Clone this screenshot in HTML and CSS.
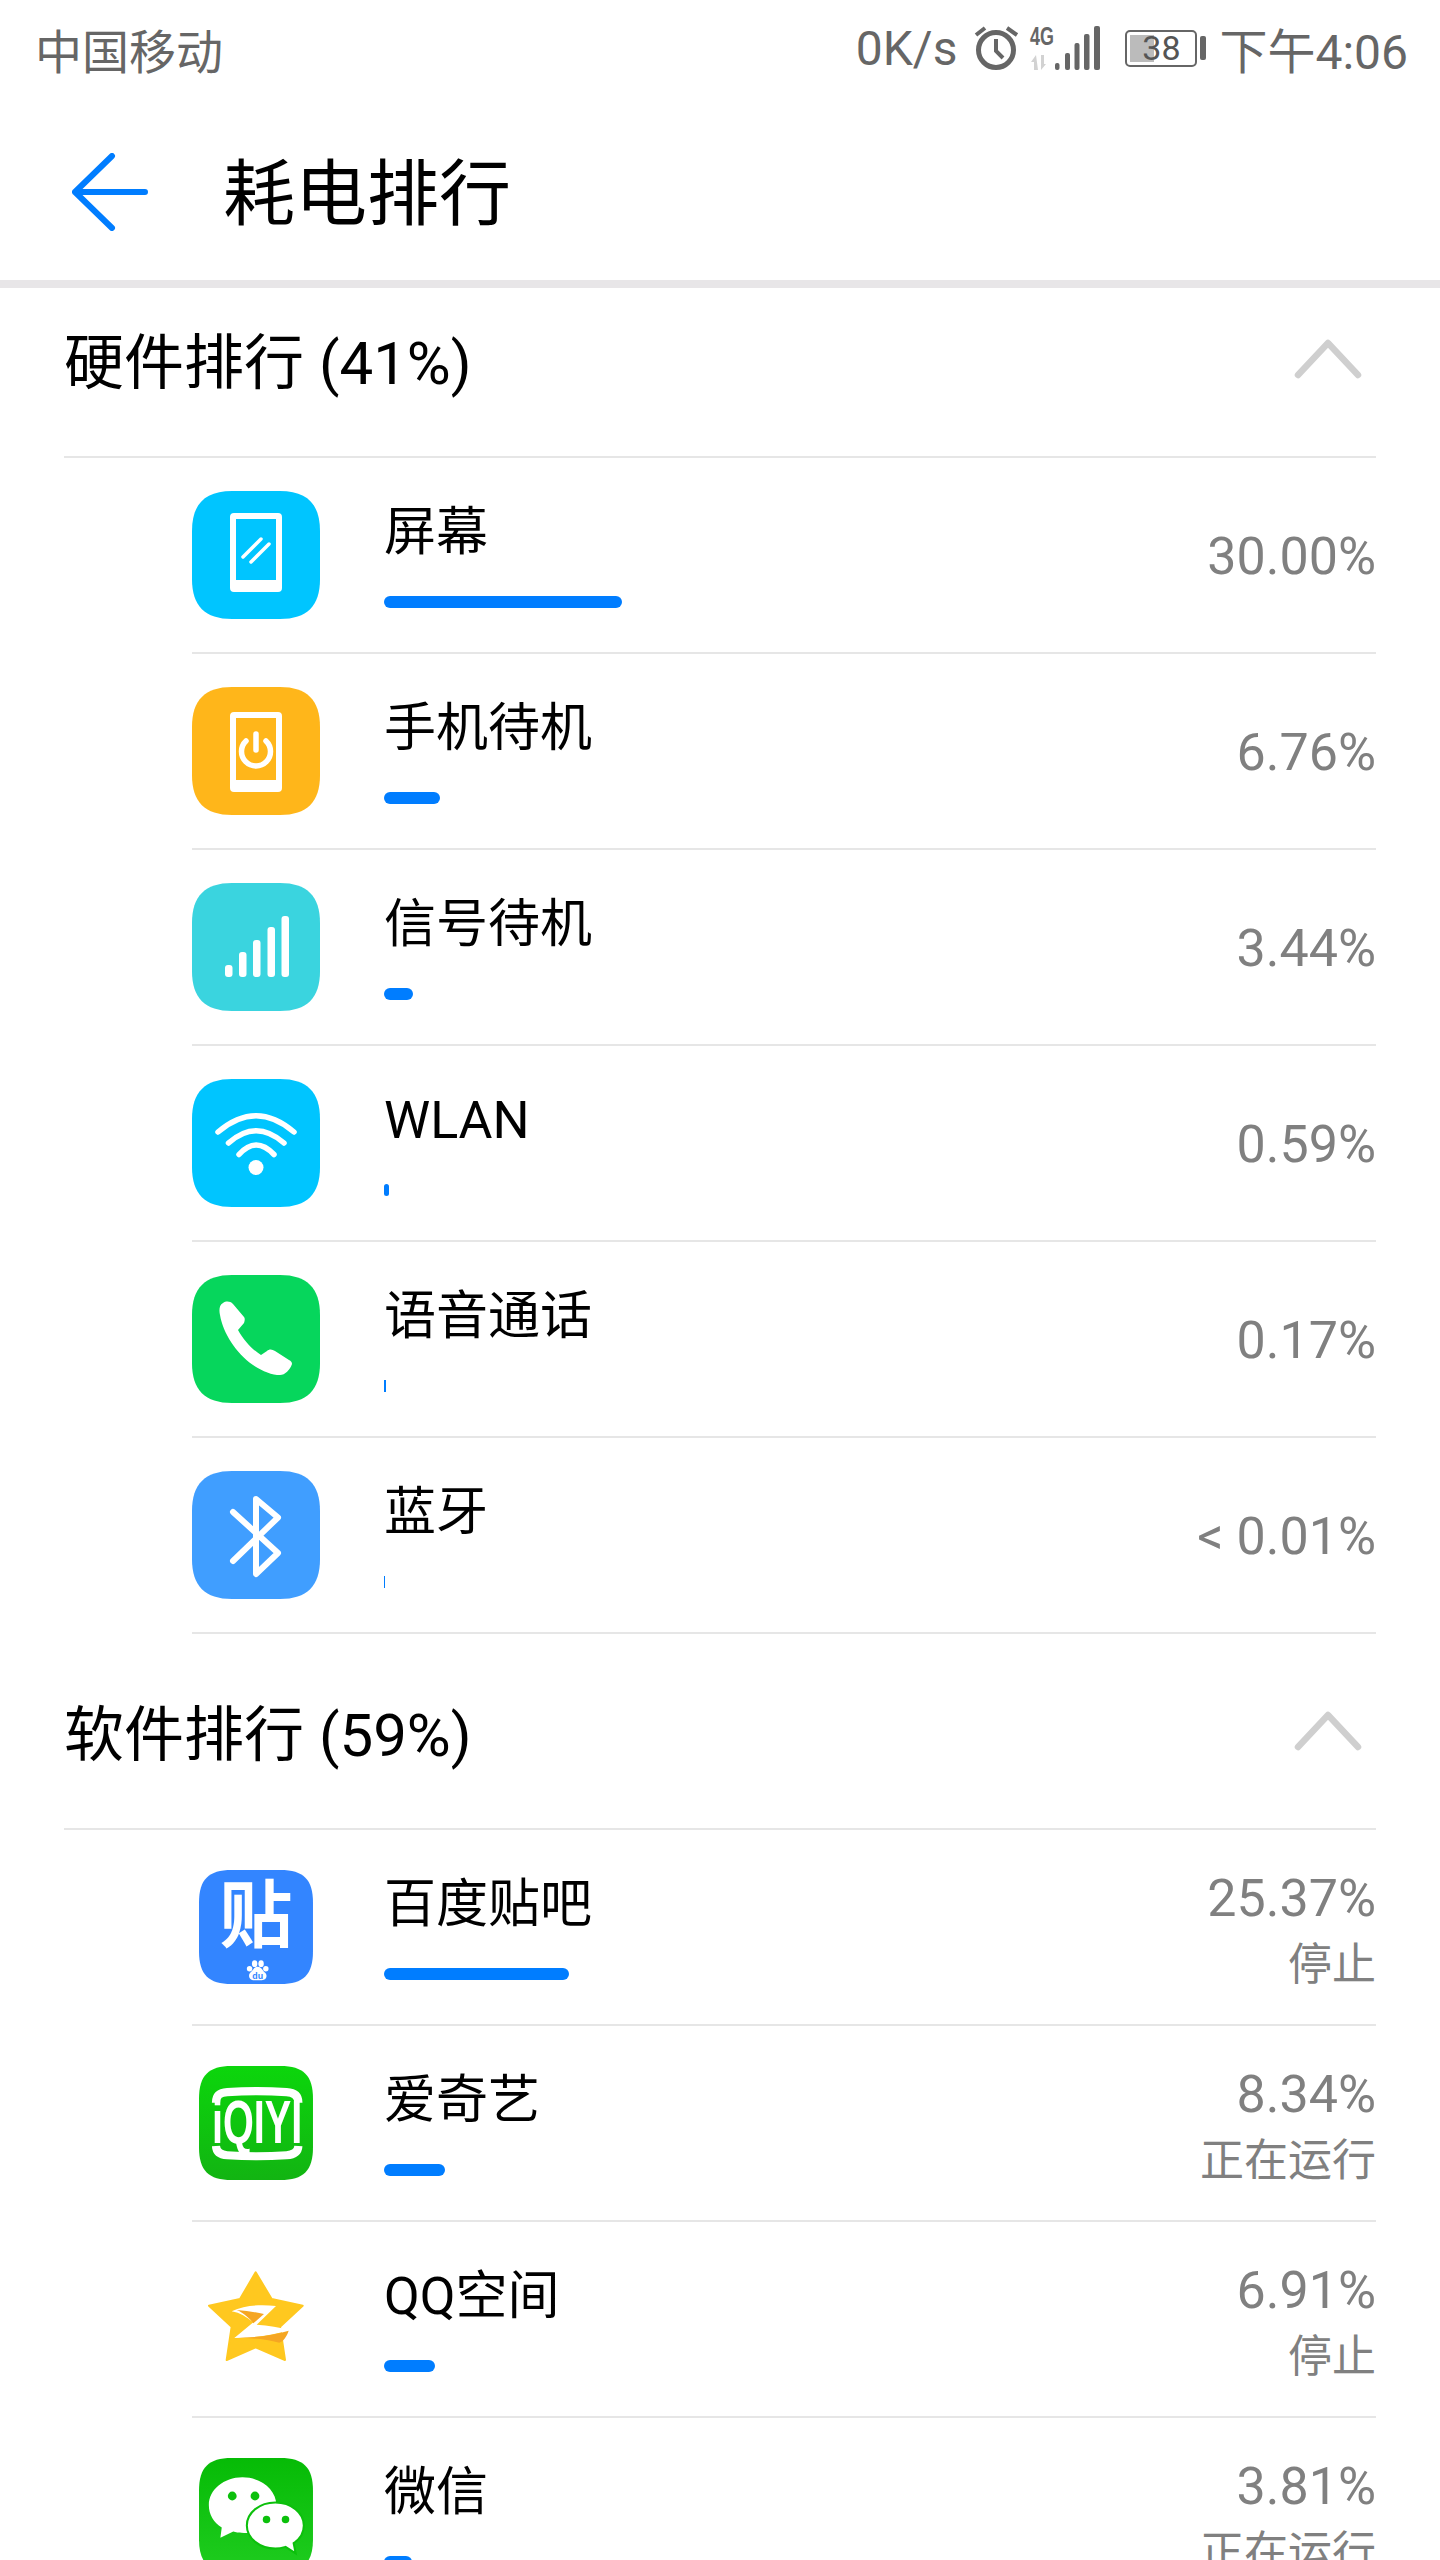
FILE: index.html
```html
<!DOCTYPE html>
<html lang="zh-CN">
<head>
    <meta charset="UTF-8">
    <meta name="viewport" content="width=device-width, initial-scale=1.0">
    <title>耗电排行</title>
    <link rel="stylesheet" href="styles.css">
</head>
<body>
    <svg class="defs" width="0" height="0">
        <defs>
            <path id="squircle" d="M40 0H88C115 0 128 13 128 40V88C128 115 115 128 88 128H40C13 128 0 115 0 88V40C0 13 13 0 40 0Z"/>
            <path id="squircle-app" d="M123 42H267C335 42 363 70 363 138V282C363 350 335 378 267 378H123C55 378 27 350 27 282V138C27 70 55 42 123 42Z"/>
            <linearGradient id="green-iqiyi" x1="0" y1="0" x2="0" y2="1">
                <stop offset="0" stop-color="#0cd60c"/>
                <stop offset="1" stop-color="#12b412"/>
            </linearGradient>
            <linearGradient id="green-wechat" x1="0" y1="0" x2="0" y2="1">
                <stop offset="0" stop-color="#06bb06"/>
                <stop offset="1" stop-color="#1fcc1f"/>
            </linearGradient>
        </defs>
    </svg>

    <div class="page">
        <div class="status-bar">
            <span class="carrier">中国移动</span>
            <div class="status-right">
                <span>0K/s</span>
                <svg class="ic-alarm" width="46" height="46" viewBox="0 0 46 46">
                    <circle cx="23" cy="25" r="17.5" fill="none" stroke="#666" stroke-width="5"/>
                    <path d="M23 14V26L30 33" fill="none" stroke="#666" stroke-width="4"/>
                    <path d="M3 10L12 3M34 3L44 10" fill="none" stroke="#666" stroke-width="4"/>
                </svg>
                <svg class="ic-net" width="70" height="44" viewBox="0 0 70 44">
                    <text class="net-label" transform="translate(0 19) scale(.69 1)">4G</text>
                    <path d="M6 29L1 36H4V44H8ZM11 29V44L16 38H14V29Z" fill="#d2d2d2"/>
                    <rect x="25" y="37" width="4.5" height="7" rx="2" fill="#666"/>
                    <rect x="35" y="27" width="5" height="17" rx="2" fill="#666"/>
                    <rect x="44.5" y="17" width="5" height="27" rx="2" fill="#666"/>
                    <rect x="54" y="8" width="5.5" height="36" rx="2" fill="#666"/>
                    <rect x="64" y="0" width="6" height="44" rx="2" fill="#666"/>
                </svg>
                <div class="battery">
                    <div class="battery-body">
                        <div class="battery-level"></div>
                        <span class="battery-num">38</span>
                    </div>
                    <div class="battery-cap"></div>
                </div>
                <span class="clock">下午4:06</span>
            </div>
        </div>

        <div class="app-bar">
            <svg class="back" width="76" height="78" viewBox="0 0 76 78">
                <path d="M40 3L3 39L40 75M3 39H73" fill="none" stroke="#007dff" stroke-width="6" stroke-linecap="round" stroke-linejoin="round"/>
            </svg>
            <h1>耗电排行</h1>
        </div>

        <div class="list">
            <div class="list-inner">
                <div class="group-head">
                    <span>硬件排行 (41%)</span>
                    <svg class="chevron" width="68" height="40" viewBox="0 0 68 40"><path d="M4 36L34 4L64 36" fill="none" stroke="#cfcfcf" stroke-width="6.5" stroke-linecap="round" stroke-linejoin="round"/></svg>
                </div>

                <div class="row">
                    <div class="icon">
                        <svg width="128" height="128" viewBox="0 0 128 128">
                            <use href="#squircle" fill="#00c5ff"/>
                            <path d="M42 22H86A4 4 0 0 1 90 26V97A4 4 0 0 1 86 101H42A4 4 0 0 1 38 97V26A4 4 0 0 1 42 22ZM44 28V89H84V28Z" fill="#fff" fill-rule="evenodd"/>
                            <path d="M51 66L69 48M59 71L77 53" stroke="#fff" stroke-width="3.5" stroke-linecap="round"/>
                        </svg>
                    </div>
                    <div class="info">
                        <div class="name">屏幕</div>
                        <div class="bar" style="width:238px"></div>
                    </div>
                    <div class="value"><div class="pct">30.00%</div></div>
                </div>

                <div class="row">
                    <div class="icon">
                        <svg width="128" height="128" viewBox="0 0 128 128">
                            <use href="#squircle" fill="#ffb61a"/>
                            <path d="M42 25H86A4 4 0 0 1 90 29V101A4 4 0 0 1 86 105H42A4 4 0 0 1 38 101V29A4 4 0 0 1 42 25ZM44 31V93H84V31Z" fill="#fff" fill-rule="evenodd"/>
                            <path d="M54 54A14.5 14.5 0 1 0 74 54M64 47V63" fill="none" stroke="#fff" stroke-width="5.5" stroke-linecap="round"/>
                        </svg>
                    </div>
                    <div class="info">
                        <div class="name">手机待机</div>
                        <div class="bar" style="width:56px"></div>
                    </div>
                    <div class="value"><div class="pct">6.76%</div></div>
                </div>

                <div class="row">
                    <div class="icon">
                        <svg width="128" height="128" viewBox="0 0 128 128">
                            <use href="#squircle" fill="#3ad4df"/>
                            <rect x="33" y="82" width="7.5" height="12" rx="3" fill="#fff"/>
                            <rect x="47" y="69" width="7.5" height="25" rx="3" fill="#fff"/>
                            <rect x="61" y="57" width="7.5" height="37" rx="3" fill="#fff"/>
                            <rect x="75.5" y="44" width="7.5" height="50" rx="3" fill="#fff"/>
                            <rect x="89.5" y="33" width="7.5" height="61" rx="3" fill="#fff"/>
                        </svg>
                    </div>
                    <div class="info">
                        <div class="name">信号待机</div>
                        <div class="bar" style="width:29px"></div>
                    </div>
                    <div class="value"><div class="pct">3.44%</div></div>
                </div>

                <div class="row">
                    <div class="icon">
                        <svg width="128" height="128" viewBox="0 0 128 128">
                            <use href="#squircle" fill="#00c5ff"/>
                            <path d="M26 53Q64 20.5 102 53M36.5 64Q64 39.5 92 64M47 75.5Q64 56.5 82 75.5" fill="none" stroke="#fff" stroke-width="5.5" stroke-linecap="round"/>
                            <circle cx="64" cy="88.5" r="7.5" fill="#fff"/>
                        </svg>
                    </div>
                    <div class="info">
                        <div class="name">WLAN</div>
                        <div class="bar" style="width:5px"></div>
                    </div>
                    <div class="value"><div class="pct">0.59%</div></div>
                </div>

                <div class="row">
                    <div class="icon">
                        <svg width="128" height="128" viewBox="0 0 128 128">
                            <use href="#squircle" fill="#06d65c"/>
                            <path d="M31 28C27 30 27 36 28 40C31 58 44 78 61 90C70 96 80 100 88 100C93 100 98 95 100 89C100 87 99 86 97 85L83 76C80 74 77 74 75 76L69 80C61 75 52 66 46 55L52 48C53 45 53 43 52 42L41 29C38 26 34 26 31 28Z" fill="#fff"/>
                        </svg>
                    </div>
                    <div class="info">
                        <div class="name">语音通话</div>
                        <div class="bar bar-thin" style="width:2px"></div>
                    </div>
                    <div class="value"><div class="pct">0.17%</div></div>
                </div>

                <div class="row">
                    <div class="icon">
                        <svg width="128" height="128" viewBox="0 0 128 128">
                            <use href="#squircle" fill="#409eff"/>
                            <path d="M41 41L86 82L64 103V28L86 46.5L41 90" fill="none" stroke="#fff" stroke-width="6" stroke-linecap="round" stroke-linejoin="round"/>
                        </svg>
                    </div>
                    <div class="info">
                        <div class="name">蓝牙</div>
                        <div class="bar bar-thin" style="width:1px"></div>
                    </div>
                    <div class="value"><div class="pct">&lt; 0.01%</div></div>
                </div>

                <div class="group-head">
                    <span>软件排行 (59%)</span>
                    <svg class="chevron" width="68" height="40" viewBox="0 0 68 40"><path d="M4 36L34 4L64 36" fill="none" stroke="#cfcfcf" stroke-width="6.5" stroke-linecap="round" stroke-linejoin="round"/></svg>
                </div>

                <div class="row">
                    <div class="icon">
                        <svg width="116" height="116" viewBox="24 24 342 342">
                            <use href="#squircle-app" y="-15" fill="#3385ff"/>
                            <text x="195" y="236" class="tieba">贴</text>
                            <circle cx="176" cy="318" r="8" fill="#fff"/>
                            <ellipse cx="191" cy="303" rx="8" ry="10" fill="#fff"/>
                            <ellipse cx="210" cy="303" rx="8" ry="10" fill="#fff"/>
                            <circle cx="224" cy="318" r="8" fill="#fff"/>
                            <path d="M200 312C188 312 186 324 178 330C170 338 176 352 190 352H212C226 352 230 338 222 330C214 324 212 312 200 312Z" fill="#fff"/>
                            <text x="200" y="349" class="tieba-du">du</text>
                        </svg>
                    </div>
                    <div class="info">
                        <div class="name">百度贴吧</div>
                        <div class="bar" style="width:185px"></div>
                    </div>
                    <div class="value value-stacked">
                        <div class="pct">25.37%</div>
                        <div class="state">停止</div>
                    </div>
                </div>

                <div class="row">
                    <div class="icon">
                        <svg width="116" height="116" viewBox="24 39 342 342">
                            <use href="#squircle-app" fill="url(#green-iqiyi)"/>
                            <path d="M77 150C77 128 90 120 110 119C170 115 225 115 285 119C305 120 320 128 320 150M77 278C78 296 90 304 110 305C170 309 225 309 285 305C305 304 319 296 320 278" fill="none" stroke="#fff" stroke-width="24"/>
                            <text class="iqiyi" transform="translate(65 270) scale(.65 1)">iQIYI</text>
                        </svg>
                    </div>
                    <div class="info">
                        <div class="name">爱奇艺</div>
                        <div class="bar" style="width:61px"></div>
                    </div>
                    <div class="value value-stacked">
                        <div class="pct">8.34%</div>
                        <div class="state">正在运行</div>
                    </div>
                </div>

                <div class="row">
                    <div class="icon">
                        <svg width="114" height="114" viewBox="27 24 342 342">
                            <path d="M197 55L245 135L338 155L270 218L285 318L197 280L110 318L125 218L57 155L150 135Z" fill="#ffc81f" stroke="#ffc81f" stroke-width="6" stroke-linejoin="round"/>
                            <path d="M125 172C165 152 215 152 258 156L200 212C235 214 270 220 298 228C245 246 185 252 133 252L190 205C170 190 150 176 125 172Z" fill="#fff"/>
                            <path d="M140 168C170 170 200 175 222 180L190 208C178 192 160 176 140 168Z" fill="#f5a623"/>
                            <path d="M135 251C190 252 245 245 296 230C290 248 280 262 268 266C225 254 180 252 135 251Z" fill="#f5a623"/>
                        </svg>
                    </div>
                    <div class="info">
                        <div class="name">QQ空间</div>
                        <div class="bar" style="width:51px"></div>
                    </div>
                    <div class="value value-stacked">
                        <div class="pct">6.91%</div>
                        <div class="state">停止</div>
                    </div>
                </div>

                <div class="row">
                    <div class="icon">
                        <svg width="116" height="116" viewBox="24 48 342 342">
                            <use href="#squircle-app" y="9" fill="url(#green-wechat)"/>
                            <path d="M155 108C100 108 56 145 56 190C56 218 70 240 94 256L90 286L128 268C140 272 148 272 160 272C215 272 255 235 255 190C255 145 210 108 155 108Z" fill="#fff"/>
                            <path d="M252 182C206 182 168 212 168 250C168 288 206 318 252 318C262 318 272 316 282 313L312 332L306 302C324 290 336 272 336 250C336 212 298 182 252 182Z" fill="#fff" stroke="#0cc00c" stroke-width="6"/>
                            <circle cx="125" cy="163" r="13" fill="#0cc00c"/>
                            <circle cx="192" cy="163" r="13" fill="#0cc00c"/>
                            <circle cx="226" cy="232" r="11" fill="#0cc00c"/>
                            <circle cx="282" cy="232" r="11" fill="#0cc00c"/>
                        </svg>
                    </div>
                    <div class="info">
                        <div class="name">微信</div>
                        <div class="bar" style="width:28px"></div>
                    </div>
                    <div class="value value-stacked">
                        <div class="pct">3.81%</div>
                        <div class="state">正在运行</div>
                    </div>
                </div>
            </div>
        </div>
    </div>
</body>
</html>
```

FILE: styles.css
```css
* {
    box-sizing: border-box;
}
body {
    margin: 0;
    background-color: #fff;
    font-family: Roboto, "Noto Sans CJK SC", sans-serif;
    color: #000;
}
.defs {
    position: absolute;
}
.page {
    width: 1440px;
    height: 2560px;
    overflow: hidden;
    display: flex;
    flex-direction: column;
}

/* status bar */
.status-bar {
    height: 96px;
    flex: none;
    display: flex;
    justify-content: space-between;
    align-items: center;
    padding: 0 32px 0 35px;
    color: #666;
}
.carrier {
    font-size: 47px;
}
.status-right {
    display: flex;
    align-items: center;
    gap: 16px;
    font-size: 48px;
}
.ic-alarm {
    margin-right: -5px;
}
.ic-net {
    overflow: visible;
}
.net-label {
    font-family: "Liberation Sans", sans-serif;
    font-size: 26px;
    font-weight: bold;
    fill: #666;
}
.battery {
    display: flex;
    align-items: center;
    gap: 3px;
    margin-left: 9px;
}
.clock {
    margin-left: -3px;
}
.battery-body {
    width: 72px;
    height: 37px;
    border: 2px solid #666;
    border-radius: 5px;
    padding: 3px;
    position: relative;
    display: flex;
}
.battery-level {
    width: 24px;
    background-color: #bbb;
}
.battery-num {
    position: absolute;
    left: 0;
    right: 0;
    top: 0;
    bottom: 0;
    display: flex;
    justify-content: center;
    align-items: center;
    font-size: 34px;
    line-height: 1;
    color: #555;
}
.battery-cap {
    width: 6px;
    height: 24px;
    border-radius: 2px;
    background-color: #666;
}

/* title */
.app-bar {
    height: 192px;
    flex: none;
    display: flex;
    align-items: center;
    padding: 0 0 0 72px;
    border-bottom: 8px solid #e8e6e8;
}
.back {
    flex: none;
    margin-top: 8px;
    margin-right: 75px;
}
.app-bar h1 {
    margin: 14px 0 0;
    font-size: 72px;
    font-weight: 400;
    line-height: 1;
}

/* list */
.list {
    flex: 1;
    overflow: hidden;
    padding: 0 64px 0 64px;
}
.list-inner {
    margin-top: -26px;
}
.group-head {
    height: 196px;
    display: flex;
    justify-content: space-between;
    align-items: center;
    padding-right: 14px;
    border-bottom: 2px solid #e6e6e6;
    font-size: 60px;
}
.group-head span {
    margin-top: -3px;
}
.row {
    height: 196px;
    margin-left: 128px;
    display: flex;
    align-items: center;
    border-bottom: 2px solid #e6e6e6;
}
.icon {
    width: 128px;
    height: 128px;
    flex: none;
    display: flex;
    justify-content: center;
    align-items: center;
    margin-right: 64px;
}
.icon svg {
    overflow: visible;
}
.info {
    flex: 1;
    align-self: flex-start;
    padding-top: 45px;
}
.name {
    font-size: 52px;
    line-height: 60px;
}
.bar {
    height: 12px;
    margin-top: 33px;
    border-radius: 6px;
    background-color: #007dff;
}
.bar-thin {
    border-radius: 0;
}
.value {
    padding-top: 3px;
    text-align: right;
    color: #808080;
}
.value-stacked {
    padding-top: 9px;
}
.pct {
    font-size: 52px;
    line-height: 65px;
}
.state {
    margin-top: 2px;
    font-size: 44px;
    line-height: 65px;
}

/* text inside app icons */
.tieba {
    font-family: "Noto Sans CJK SC", sans-serif;
    font-size: 215px;
    font-weight: 700;
    fill: #fff;
    text-anchor: middle;
}
.tieba-du {
    font-family: "Liberation Sans", sans-serif;
    font-size: 26px;
    font-weight: 700;
    fill: #3385ff;
    text-anchor: middle;
}
.iqiyi {
    font-family: "Liberation Sans", sans-serif;
    font-size: 180px;
    font-weight: 700;
    fill: #fff;
}
```
